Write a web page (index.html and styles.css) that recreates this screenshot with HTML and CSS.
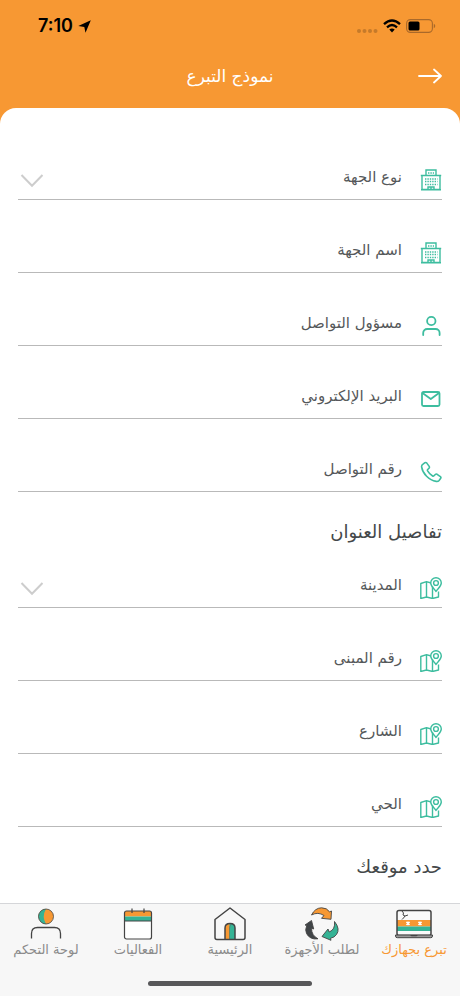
FILE: index.html
```
<!DOCTYPE html>
<html lang="ar" dir="rtl">
<head>
<meta charset="utf-8">
<meta name="viewport" content="width=device-width, initial-scale=1">
<title>نموذج التبرع</title>
<link rel="stylesheet" href="styles.css">
</head>
<body>
<svg class="sprite" aria-hidden="true">
  <symbol id="building" viewBox="0 0 22 22">
    <path d="M.8 6.500h20.400M2 6.500v14h18v-14M6 6.500v-5.500h10v5.500M1 20.800h20M8 20.500v-2.500h6v2.500M11 18v2.500" fill="none" stroke="currentColor" stroke-width="1.400"/>
    <path d="M8 4h6M5 10h12.500M5 12.500h12.500M5 15.500h12.500" fill="none" stroke="currentColor" stroke-width="1.500" stroke-dasharray="1.400 1"/>
  </symbol>
  <symbol id="person" viewBox="0 0 22 22">
    <g fill="none" stroke="currentColor" stroke-width="1.800" stroke-linecap="round"><circle cx="11.300" cy="6" r="4.200"/><path d="M3.200 20v-2a4 4 0 0 1 4-4h8.400a4 4 0 0 1 4 4v2"/></g>
  </symbol>
  <symbol id="mail" viewBox="0 0 22 22">
    <g fill="none" stroke="currentColor" stroke-width="1.800" stroke-linejoin="round"><rect x="2" y="4" width="17.500" height="14" rx="1.500"/><path d="M2.500 5l8.300 6L19 5"/></g>
  </symbol>
  <symbol id="phone" viewBox="0 0 22 22">
    <path d="M3 3.200L5 1.700q1-.6 1.800.4l2.400 3.300q.6 1-.2 1.800L7.700 8.500q-.5.6-.1 1.400 1.800 3.200 5 5.100.8.400 1.400-.2l1.300-1.300q.8-.8 1.800-.2l3.300 2.300q.9.700.3 1.700l-1.600 2.100q-1.100 1.300-2.900 1-5.500-.9-9.600-5.100-4.200-4.300-5-9.500-.1-1.600 1.400-2.600z" fill="none" stroke="currentColor" stroke-width="1.600" stroke-linejoin="round"/>
  </symbol>
  <symbol id="map" viewBox="0 0 22 22">
    <g fill="none" stroke="currentColor" stroke-width="1.400" stroke-linejoin="round"><path d="M11 6L6.500 4.700.8 6.500v15l5.700-1.500 6 1.500 6-1.500v-5.500M6.500 4.700v15M12.500 9.500v12"/><path d="M16 14.500c-1.300-2.600-5.300-5-5.300-8.500a5.300 5.300 0 0 1 10.600 0c0 3.500-4 5.900-5.300 8.500z"/><circle cx="16" cy="6" r="2.400"/></g>
  </symbol>
  <symbol id="chevron" viewBox="0 0 24 14">
    <path d="M1.500 1L12 11.800 22.500 1" fill="none" stroke="currentColor" stroke-width="2"/>
  </symbol>
</svg>

<header class="header">
  <div class="status" dir="ltr">
    <div class="status-group">
      <span class="time">7:10</span>
      <svg width="13" height="13" viewBox="0 0 13 13" aria-hidden="true"><path d="M12.800.3L7.500 12.700 6.300 7 .3 6z" fill="#000"/></svg>
    </div>
    <div class="status-group">
      <svg width="22" height="14" viewBox="0 0 22 14" aria-hidden="true"><g fill="#c57a2a"><circle cx="3" cy="12" r="2"/><circle cx="8.500" cy="12" r="2"/><circle cx="14" cy="12" r="2"/><circle cx="19.500" cy="12" r="2"/></g></svg>
      <svg width="18" height="14" viewBox="0 0 18 14" aria-hidden="true"><g fill="none" stroke="#000" stroke-width="2.300"><path d="M1 5.200q8-7.400 16 0M4 8.300q5-4.500 10 0"/></g><path d="M6.300 10.600q2.700-2.200 5.400 0L9 13.500z"/></svg>
      <svg width="30" height="14" viewBox="0 0 30 14" aria-hidden="true"><rect x=".6" y=".6" width="25.800" height="12.800" rx="3.800" fill="none" stroke="#a9692a" stroke-width="1.100"/><rect x="2.500" y="2.500" width="11" height="9" rx="1.500"/><path d="M27.800 4.800v4.400q1.500-.7 1.500-2.200t-1.500-2.200z" fill="#a9692a"/></svg>
    </div>
  </div>
  <div class="title-bar">
    <button class="back" type="button" aria-label="رجوع"><svg width="24" height="16" viewBox="0 0 24 16" aria-hidden="true"><path d="M1 8h22M16 1.500L23 8l-7 6.500" fill="none" stroke="#fff" stroke-width="1.800" stroke-linecap="round" stroke-linejoin="round"/></svg></button>
    <h1>نموذج التبرع</h1>
  </div>
</header>

<main class="sheet">
  <form>
    <div class="fields">
      <div class="field"><svg class="icon" aria-hidden="true"><use href="#building"/></svg><label for="type">نوع الجهة</label><select id="type"><option></option></select><svg class="chevron" aria-hidden="true"><use href="#chevron"/></svg></div>
      <div class="field"><svg class="icon" aria-hidden="true"><use href="#building"/></svg><label for="name">اسم الجهة</label><input id="name" type="text"></div>
      <div class="field"><svg class="icon" aria-hidden="true"><use href="#person"/></svg><label for="contact">مسؤول التواصل</label><input id="contact" type="text"></div>
      <div class="field"><svg class="icon" aria-hidden="true"><use href="#mail"/></svg><label for="email">البريد الإلكتروني</label><input id="email" type="email"></div>
      <div class="field"><svg class="icon" aria-hidden="true"><use href="#phone"/></svg><label for="phone-number">رقم التواصل</label><input id="phone-number" type="tel"></div>
    </div>
    <h2>تفاصيل العنوان</h2>
    <div class="fields">
      <div class="field"><svg class="icon" aria-hidden="true"><use href="#map"/></svg><label for="city">المدينة</label><select id="city"><option></option></select><svg class="chevron" aria-hidden="true"><use href="#chevron"/></svg></div>
      <div class="field"><svg class="icon" aria-hidden="true"><use href="#map"/></svg><label for="building-number">رقم المبنى</label><input id="building-number" type="text"></div>
      <div class="field"><svg class="icon" aria-hidden="true"><use href="#map"/></svg><label for="street">الشارع</label><input id="street" type="text"></div>
      <div class="field"><svg class="icon" aria-hidden="true"><use href="#map"/></svg><label for="district">الحي</label><input id="district" type="text"></div>
    </div>
    <h2>حدد موقعك</h2>
  </form>
</main>

<nav class="tabs">
  <div class="tab-list">
    <a class="tab active" href="#donate" aria-current="page">
      <svg width="40" height="34" viewBox="0 0 40 34" aria-hidden="true"><rect x="3" y="3.500" width="34" height="25" rx="2" fill="#fafafa"/><path d="M3 13h34v6.500H3z" fill="#f79833"/><path d="M3 19.500h34V24H3z" fill="#35b395"/><rect x="3" y="3.500" width="34" height="25" rx="2" fill="none" stroke="#444" stroke-width="1.500"/><path d="M1.500 28h37v1.200q0 1.500-2 1.500h-33q-2 0-2-1.500z" fill="#999" stroke="#444"/><path d="M16 28h8l-1.500 1.300h-5z" fill="#444"/><path d="M8 4l1.500 2-.5 2 2 1-1.500 2-1.500 1.500M11 9l3-1" fill="none" stroke="#444"/><path d="M12.500 14.800l3 3m0-3l-3 3M24.500 14.800l3 3m0-3l-3 3" stroke="#fff" stroke-width="1.700"/></svg>
      <span>تبرع بجهازك</span>
    </a>
    <a class="tab" href="#request">
      <svg width="36" height="34" viewBox="0 0 36 34" aria-hidden="true"><g stroke="#444" stroke-width=".9" stroke-linejoin="round"><path d="M7.500 8Q11 1 17.500.8q5.500 0 8 4l2-.8-.5 8.300-9.500-1 2.500-2.800Q14 4.500 7.500 8z" fill="#f79833"/><path d="M30.500 14.500q6 7.500 2 13-2 3-6 3.800l.5 2-9-3.800 6-7.500 1.200 3Q31.500 22.500 30.500 14.500z" fill="#35b395"/><path d="M14 31.800Q6 33 2.500 26.500.8 22.500 2.800 18.500L1 18l6.500-4.500 2.200 8.500-2.200-.8Q7.500 28.500 14 31.800z" fill="#404447"/></g></svg>
      <span>لطلب الأجهزة</span>
    </a>
    <a class="tab" href="#home">
      <svg width="34" height="34" viewBox="0 0 34 34" aria-hidden="true"><path d="M12 32V21q0-4.500 5-4.500t5 4.500v11z" fill="#35b395"/><path d="M12 32V21q0-4 4.500-4.500V32z" fill="#f79833"/><path d="M16.500 32V21q0-2 1.500-3.500" fill="none" stroke="#55776a" stroke-width=".7"/><g fill="none" stroke="#444" stroke-width="1.500" stroke-linejoin="round"><path d="M2 12.500L17 1l15 11.500v18q0 2-2 2H4q-2 0-2-2z"/><path d="M12 32V21q0-4.500 5-4.500t5 4.500v11"/></g></svg>
      <span>الرئيسية</span>
    </a>
    <a class="tab" href="#events">
      <svg width="32" height="34" viewBox="0 0 32 34" aria-hidden="true"><rect x="2.500" y="4" width="27" height="28" rx="2" fill="#fff"/><path d="M2.500 9.500V6q0-2 2-2h23q2 0 2 2v3.500z" fill="#f79833"/><path d="M2.500 9.500h27v4.500h-27z" fill="#35b395"/><g fill="none" stroke="#444" stroke-width="1.200"><rect x="2.500" y="4" width="27" height="28" rx="2"/><path d="M2.500 14h27M10 1.500V6M22 1.500V6"/></g></svg>
      <span>الفعاليات</span>
    </a>
    <a class="tab" href="#dashboard">
      <svg width="34" height="34" viewBox="0 0 34 34" aria-hidden="true"><circle cx="17" cy="9.500" r="7.500" fill="#f79833"/><path d="M17 2a7.500 7.500 0 0 0 0 15q-4.500-7.500 0-15z" fill="#35b395"/><g fill="none" stroke="#444" stroke-width="1.300"><circle cx="17" cy="9.500" r="7.500" stroke-width=".8"/><path d="M2.500 31.500v-5q0-6 6-6h17q6 0 6 6v5"/></g></svg>
      <span>لوحة التحكم</span>
    </a>
  </div>
  <div class="home-indicator"></div>
</nav>
</body>
</html>
```
FILE: styles.css
```
* {
  box-sizing: border-box;
}

body {
  margin: 0;
  min-height: 100vh;
  display: flex;
  flex-direction: column;
  background: #f79833;
  color: #55585a;
  font-family: "DejaVu Sans", sans-serif;
  font-size: 15px;
}

svg {
  display: block;
  flex: none;
}

.sprite {
  position: absolute;
  width: 0;
  height: 0;
}

.status {
  display: flex;
  align-items: center;
  justify-content: space-between;
  height: 44px;
  padding: 8px 24px 0 38px;
}

.status-group {
  display: flex;
  align-items: center;
  gap: 5px;
}

.time {
  color: #000;
  font: 600 18px/24px Inter, sans-serif;
}

.title-bar {
  display: grid;
  grid-template-columns: 1fr auto 1fr;
  align-items: center;
  height: 64px;
  padding: 0 18px;
}

.back {
  justify-self: start;
  padding: 0;
  border: 0;
  background: none;
  cursor: pointer;
}

h1 {
  margin: 0;
  color: #fff;
  font-size: 17px;
  line-height: 24px;
  font-weight: 400;
}

.sheet {
  flex: 1;
  padding: 46px 18px 24px;
  border-radius: 16px 16px 0 0;
  background: #fff;
}

.fields {
  display: grid;
  gap: 27px;
}

.field {
  display: flex;
  align-items: center;
  height: 46px;
  border-bottom: 1px solid #b9b9b9;
}

.icon {
  align-self: flex-end;
  width: 22px;
  height: 22px;
  margin-bottom: 8px;
  margin-inline-end: 18px;
  color: #3dbd9f;
}

.field input,
.field select {
  flex: 1;
  min-width: 0;
  height: 44px;
  padding: 0 8px;
  border: 0;
  outline: 0;
  appearance: none;
  background: none;
  color: inherit;
  font: inherit;
}

.chevron {
  width: 24px;
  height: 14px;
  margin-top: 8px;
  margin-inline-end: 2px;
  color: #cdcdcd;
}

h2 {
  margin: 28px 0 18px;
  color: #44484a;
  font-size: 18px;
  line-height: 24px;
  font-weight: 400;
}

.sheet h2:last-child {
  margin-bottom: 0;
}

.tabs {
  border-top: 1px solid #d5d6d9;
  background: #f7f7f7;
}

.tab-list {
  display: grid;
  grid-template-columns: repeat(5, 1fr);
}

.tab {
  display: flex;
  flex-direction: column;
  align-items: center;
  padding-top: 3px;
  color: #8b8b8b;
  font-size: 13px;
  line-height: 18px;
  text-decoration: none;
  white-space: nowrap;
}

.tab.active {
  color: #f79833;
}

.home-indicator {
  width: 164px;
  height: 5px;
  margin: 22px auto 10px;
  border-radius: 3px;
  background: #58585a;
}
```
